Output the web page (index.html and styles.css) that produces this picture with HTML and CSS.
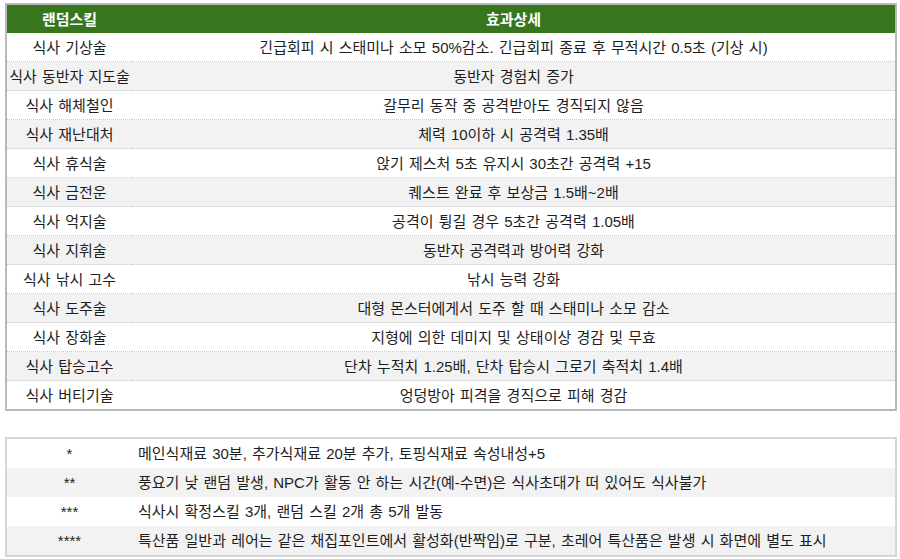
FILE: index.html
```html
<!DOCTYPE html>
<html lang="ko">
<head>
<meta charset="utf-8">
<link rel="stylesheet" href="styles.css">
</head>
<body>
<table class="skills">
  <colgroup><col class="c1"><col></colgroup>
  <thead>
    <tr><th>랜덤스킬</th><th>효과상세</th></tr>
  </thead>
  <tbody>
    <tr><td>식사 기상술</td><td>긴급회피 시 스태미나 소모 50%감소. 긴급회피 종료 후 무적시간 0.5초 (기상 시)</td></tr>
    <tr><td>식사 동반자 지도술</td><td>동반자 경험치 증가</td></tr>
    <tr><td>식사 해체철인</td><td>갈무리 동작 중 공격받아도 경직되지 않음</td></tr>
    <tr><td>식사 재난대처</td><td>체력 10이하 시 공격력 1.35배</td></tr>
    <tr><td>식사 휴식술</td><td>앉기 제스처 5초 유지시 30초간 공격력 +15</td></tr>
    <tr><td>식사 금전운</td><td>퀘스트 완료 후 보상금 1.5배~2배</td></tr>
    <tr><td>식사 억지술</td><td>공격이 튕길 경우 5초간 공격력 1.05배</td></tr>
    <tr><td>식사 지휘술</td><td>동반자 공격력과 방어력 강화</td></tr>
    <tr><td>식사 낚시 고수</td><td>낚시 능력 강화</td></tr>
    <tr><td>식사 도주술</td><td>대형 몬스터에게서 도주 할 때 스태미나 소모 감소</td></tr>
    <tr><td>식사 장화술</td><td>지형에 의한 데미지 및 상태이상 경감 및 무효</td></tr>
    <tr><td>식사 탑승고수</td><td>단차 누적치 1.25배, 단차 탑승시 그로기 축적치 1.4배</td></tr>
    <tr><td>식사 버티기술</td><td>엉덩방아 피격을 경직으로 피해 경감</td></tr>
  </tbody>
</table>

<table class="notes">
  <colgroup><col class="c1"><col></colgroup>
  <tbody>
    <tr><td class="mark">*</td><td>메인식재료 30분, 추가식재료 20분 추가, 토핑식재료 속성내성+5</td></tr>
    <tr><td class="mark">**</td><td>풍요기 낮 랜덤 발생, NPC가 활동 안 하는 시간(예-수면)은 식사초대가 떠 있어도 식사불가</td></tr>
    <tr><td class="mark">***</td><td>식사시 확정스킬 3개, 랜덤 스킬 2개 총 5개 발동</td></tr>
    <tr><td class="mark">****</td><td>특산품 일반과 레어는 같은 채집포인트에서 활성화(반짝임)로 구분, 초레어 특산품은 발생 시 화면에 별도 표시</td></tr>
  </tbody>
</table>
</body>
</html>
```

FILE: styles.css
```css
html, body {
  margin: 0;
  padding: 0;
  background: #ffffff;
}

body {
  padding: 3px 3px 0 5px;
  font-family: "Liberation Sans", "Noto Sans CJK KR", sans-serif;
  font-size: 15px;
  word-spacing: 1px;
  color: #1e1e1e;
}

table {
  width: 892px;
  border-collapse: collapse;
  table-layout: fixed;
}

col.c1 {
  width: 126px;
}

.skills {
  border: 2px solid #b9b9b9;
}

.skills th {
  background: #38761d;
  color: #ffffff;
  font-weight: 700;
  height: 28px;
  padding: 0;
  text-align: center;
  line-height: 1;
}

.skills td {
  height: 28px;
  padding: 0;
  text-align: center;
  line-height: 1;
  border-top: 1px dotted #c8c8c8;
  white-space: nowrap;
}

.skills tbody tr:first-child td {
  border-top: none;
}

.skills tbody tr:nth-child(even) td {
  background: #f2f2f2;
}

.notes {
  margin-top: 26px;
  border: 2px solid #d6d6d6;
}

.notes td {
  height: 29px;
  padding: 0 0 0 6px;
  line-height: 1;
  white-space: nowrap;
}

.notes td.mark {
  text-align: center;
  padding: 0;
}

.notes tr:nth-child(even) td {
  background: #f2f2f2;
}
```
